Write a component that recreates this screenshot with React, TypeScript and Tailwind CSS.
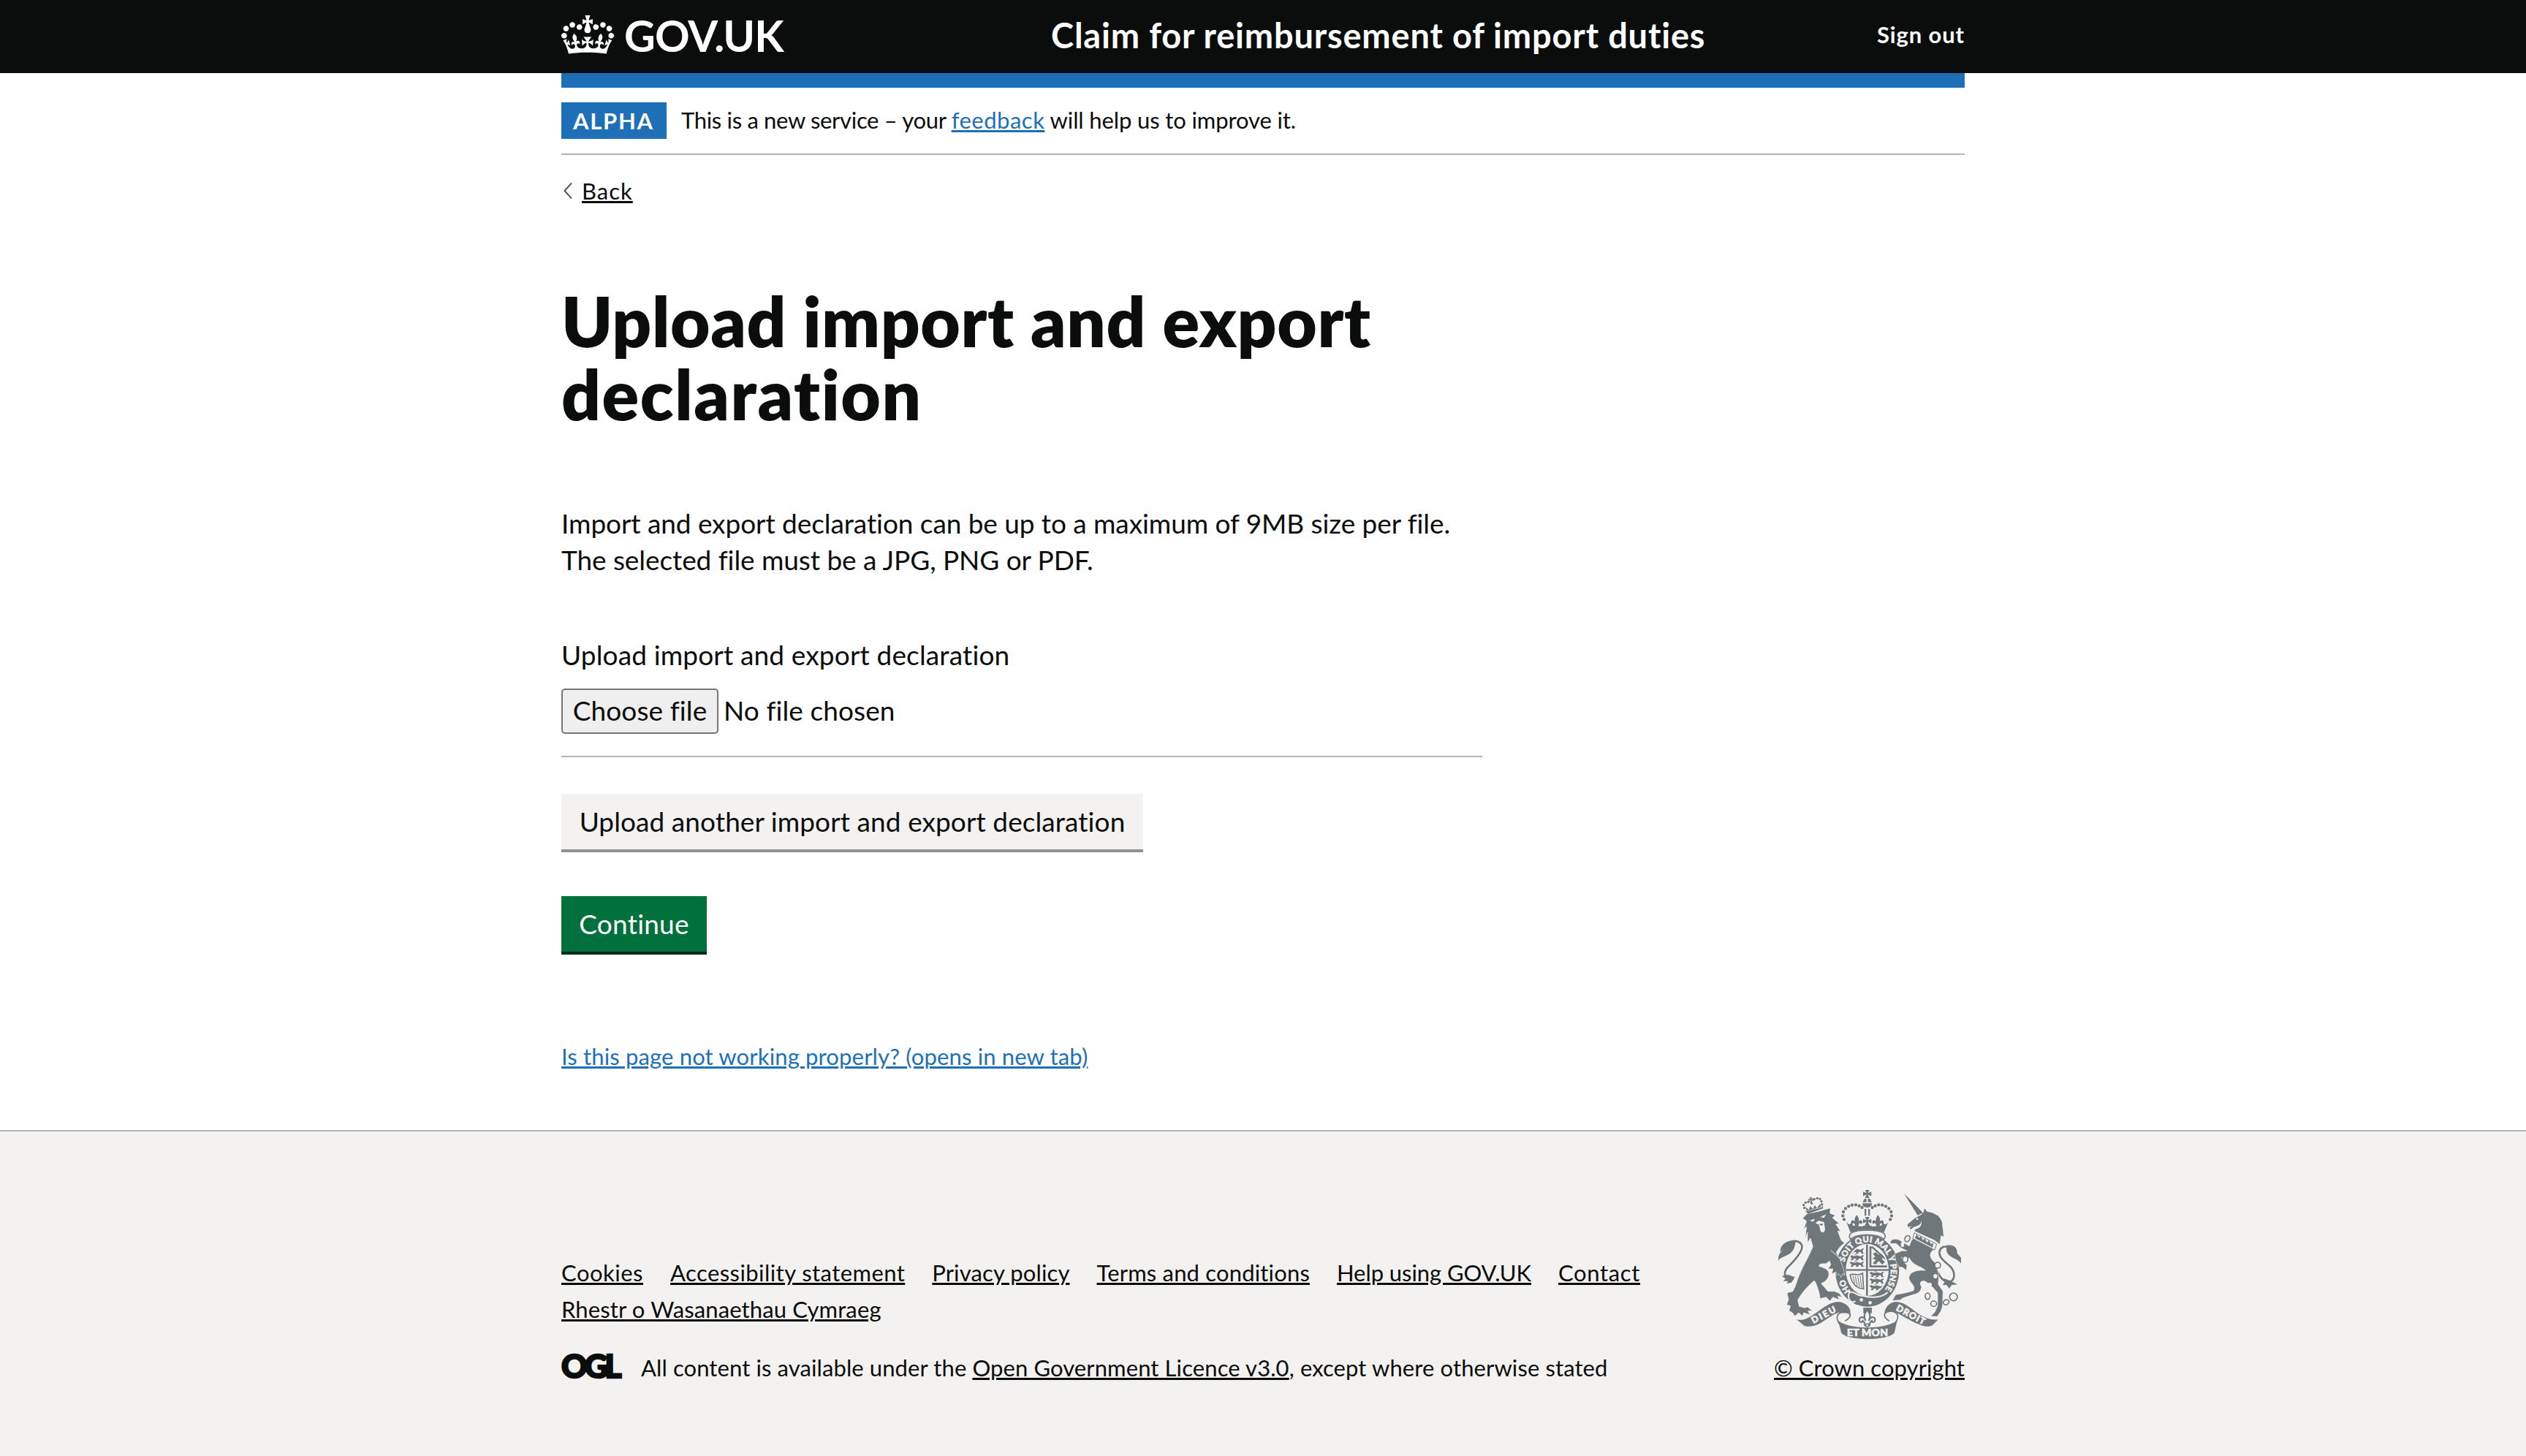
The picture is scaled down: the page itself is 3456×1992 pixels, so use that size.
import type { ReactNode } from "react";

const link = "underline decoration-[3px] underline-offset-[2px]";

function Crown() {
  return (
    <svg className="mt-[21px] h-[53px] w-[72px] shrink-0" viewBox="0 0 132 97" fill="#ffffff" aria-hidden="true">
      <path
        fillRule="evenodd"
        d="M25 30.2c3.5 1.5 7.7-.2 9.1-3.7 1.5-3.6-.2-7.8-3.9-9.2-3.6-1.4-7.6.3-9.1 3.9-1.4 3.5.3 7.5 3.9 9zM9 39.5c3.6 1.5 7.8-.2 9.2-3.7 1.5-3.6-.2-7.8-3.9-9.1-3.6-1.5-7.6.2-9.1 3.8-1.4 3.5.3 7.5 3.8 9zM4.4 57.2c3.5 1.5 7.7-.2 9.1-3.8 1.5-3.6-.2-7.7-3.9-9.1-3.5-1.5-7.6.3-9.1 3.8-1.4 3.5.3 7.6 3.9 9.1zm38.3-21.4c3.5 1.5 7.7-.2 9.1-3.8 1.5-3.6-.2-7.7-3.9-9.1-3.6-1.5-7.6.3-9.1 3.8-1.3 3.6.4 7.7 3.9 9.1zm64.4-5.6c-3.6 1.5-7.8-.2-9.1-3.7-1.5-3.6.2-7.8 3.8-9.2 3.6-1.4 7.7.3 9.2 3.9 1.3 3.5-.4 7.5-3.9 9zm15.9 9.3c-3.6 1.5-7.7-.2-9.1-3.7-1.5-3.6.2-7.8 3.7-9.1 3.6-1.5 7.7.2 9.2 3.8 1.5 3.5-.3 7.5-3.8 9zm4.7 17.7c-3.6 1.5-7.8-.2-9.2-3.8-1.5-3.6.2-7.7 3.9-9.1 3.6-1.5 7.7.3 9.2 3.8 1.3 3.5-.4 7.6-3.9 9.1zM89.3 35.8c-3.6 1.5-7.8-.2-9.2-3.8-1.4-3.6.2-7.7 3.9-9.1 3.6-1.5 7.7.3 9.2 3.8 1.4 3.6-.3 7.7-3.9 9.1zM69.7 17.7l8.9 4.7V9.3l-8.9 2.8c-.2-.3-.5-.6-.9-.9L72.4 0H59.6l3.5 11.2c-.3.3-.6.5-.9.9l-8.8-2.8v13.1l8.8-4.7c.3.3.6.7.9.9l-5 15.4v.1c-.2.8-.4 1.6-.4 2.4 0 4.1 3.1 7.5 7 8.1h.2c.3 0 .7.1 1 .1.4 0 .7 0 1-.1h.2c4-.6 7.1-4.1 7.1-8.1 0-.8-.1-1.7-.4-2.4V34l-5.1-15.4c.4-.2.7-.6 1-.9zM66 92.8c16.9 0 32.8 1.1 47.1 3.2 4-16.9 8.9-26.7 14-33.5l-9.6-3.4c1 4.9 1.1 7.2 0 10.2-1.5-1.4-3-4.3-4.2-8.7L108.6 76c2.8-2 5-3.2 7.5-3.3-4.4 9.4-10 11.9-13.6 11.2-4.3-.8-6.3-4.6-5.6-7.9 1-4.7 5.7-5.9 8-.5 4.3-8.7-3-11.4-7.6-8.8 7.1-7.2 7.9-13.5 2.1-21.1-8 6.1-8.1 12.3-4.5 20.8-4.7-5.4-12.1-2.5-9.5 6.2 3.4-5.2 7.9-2 7.2 3.1-.6 4.3-6.4 7.8-13.5 7.2-10.3-.9-10.9-8-11.2-13.8 2.5-.5 7.1 1.8 11 7.3L80.2 60c-4.1 4.4-8 5.3-12.3 5.4 1.4-4.4 8-11.6 8-11.6H55.5s6.4 7.2 7.9 11.6c-4.2-.1-8-1-12.3-5.4l1.4 16.4c3.9-5.5 8.5-7.7 10.9-7.3-.3 5.8-.9 12.8-11.1 13.8-7.2.6-12.9-2.9-13.5-7.2-.7-5 3.8-8.3 7.1-3.1 2.7-8.7-4.6-11.6-9.4-6.2 3.7-8.5 3.6-14.7-4.6-20.8-5.8 7.6-5 13.9 2.2 21.1-4.7-2.6-11.9.1-7.7 8.8 2.3-5.5 7.1-4.2 8.1.5.7 3.3-1.3 7.1-5.7 7.9-3.5.7-9-1.8-13.5-11.2 2.5.1 4.7 1.3 7.5 3.3l-4.7-15.4c-1.2 4.4-2.7 7.2-4.3 8.7-1.1-3-.9-5.3 0-10.2l-9.5 3.4c5 6.9 9.9 16.7 14 33.5 14.8-2.1 30.8-3.2 47.7-3.2z"
      />
    </svg>
  );
}

const ink = "#6f777b";
const paper = "#f3f2f1";

const crownBeads: [number, number][] = [
  [366, 205], [361, 190], [363, 174], [372, 160], [385, 151], [399, 146], [414, 145], [428, 149], [440, 156],
];

/* A three-lion quarter, drawn as rows of walking beasts. */
function Passants({ x, y }: { x: number; y: number }) {
  return (
    <g transform={`translate(${x} ${y})`}>
      {[0, 27, 54].map((dy) => (
        <path
          key={dy}
          transform={`translate(0 ${dy})`}
          d="M0 6 L8 2 L14 6 L36 5 L46 8 L54 2 L60 4 L54 10 L56 20 L64 22 L50 24 L46 16 L36 17 L38 23 L26 24 L28 17 L18 17 L14 24 L4 23 L10 16 L6 12 Z"
        />
      ))}
      <path d="M20 0 q8 -4 12 4 M20 27 q8 -4 12 4 M20 54 q8 -4 12 4" fill="none" stroke={ink} strokeWidth="3" />
    </g>
  );
}

function Pattee({ x, y, r }: { x: number; y: number; r: number }) {
  return (
    <path
      transform={`translate(${x} ${y}) scale(${r})`}
      d="M-.55 -1 H.55 L.15 -.15 L1 -.55 V.55 L.15 .15 L.55 1 H-.55 L-.15 .15 L-1 .55 V-.55 L-.15 -.15 Z"
    />
  );
}

function Fleur({ x, y, s }: { x: number; y: number; s: number }) {
  return (
    <path
      transform={`translate(${x} ${y}) scale(${s})`}
      d="M0 -20 C10 -8 8 0 4 8 C8 -4 22 -4 20 8 C18 14 12 12 12 8 C8 10 6 14 6 20 H-6 C-6 14 -8 10 -12 8 C-12 12 -18 14 -20 8 C-22 -4 -8 -4 -4 8 C-8 0 -10 -8 0 -20 Z"
    />
  );
}

function RoyalArms() {
  return (
    <svg
      className="h-[204px] w-[250px] font-['Lato',sans-serif]"
      viewBox="96 84 750 612"
      fill={ink}
      role="img"
      aria-label="Royal coat of arms"
    >
      {/* Garter and shield */}
      <ellipse cx="461" cy="415" rx="131" ry="148" />
      <ellipse cx="461" cy="412" rx="88" ry="107" fill={paper} />
      <defs>
        <path id="garter" d="M368 381 A97 117 0 1 1 530 497" />
        <path id="garter-start" d="M392 498 A97 117 0 0 1 366 439" />
        <clipPath id="shield">
          <ellipse cx="461" cy="412" rx="82" ry="101" />
        </clipPath>
      </defs>
      <g clipPath="url(#shield)">
        <Passants x={388} y={322} />
        <Passants x={470} y={418} />
        <path d="M470 316 H484 L546 372 V402 H470 Z M478 324 V394 H540 V376 L482 324 Z" fillRule="evenodd" />
        <path d="M484 346 L496 340 L508 350 L520 346 L530 362 L520 366 L534 380 L522 390 L508 376 L496 390 L484 386 L496 370 L482 366 L494 358 Z" />
        <g fill="none" stroke={ink} strokeWidth="5">
          <path d="M391 432 C405 425 425 440 442 426 L446 490 C420 490 396 468 391 432 Z" />
          <path strokeWidth="3" d="M402 436 L410 468 M412 438 L420 478 M422 438 L430 484 M432 436 L438 486" />
        </g>
      </g>
      <rect x="374" y="409" width="176" height="7" />
      <rect x="456" y="308" width="8" height="210" />
      <g fill={paper} stroke={paper} strokeWidth="1.5" fontWeight="900" fontSize="34">
        <text textLength="384" lengthAdjust="spacing">
          <textPath href="#garter">SOIT QUI MAL Y PENSE</textPath>
        </text>
        <text>
          <textPath href="#garter-start">HO</textPath>
        </text>
      </g>
      <path d="M384 504 C410 496 415 520 440 518 C480 528 520 526 545 505" fill="none" stroke={paper} strokeWidth="6" />
      <path d="M392 500 a16 22 0 1 0 20 40" fill="none" stroke={paper} strokeWidth="6" />
      <circle cx="437" cy="535" r="7" fill={paper} />
      <circle cx="473" cy="547" r="7" fill={paper} />

      {/* Crown */}
      <Pattee x={461} y={100} r={17} />
      <path d="M450 120 H458 V134 H442 Z M464 120 H472 L480 134 H464 Z M441 139 H481 C481 162 441 162 441 139 Z" />
      {crownBeads.map(([x, y]) => (
        <g key={`${x}-${y}`}>
          <circle cx={x} cy={y} r="6.5" />
          <circle cx={922 - x} cy={y} r="6.5" />
        </g>
      ))}
      <path d="M450 162 H457 V190 H450 Z M465 162 H472 V190 H465 Z" />
      <Pattee x={461} y={212} r={17} />
      <Fleur x={418} y={210} s={1.15} />
      <Fleur x={505} y={210} s={1.15} />
      <path d="M374 210 C384 232 392 226 398 216 L402 230 L440 234 L461 226 L484 234 L520 230 L524 216 C532 228 542 230 550 210 L530 258 C490 244 430 244 392 258 Z" />
      <path d="M392 286 C378 262 400 250 461 249 C522 250 546 262 530 286 C500 262 422 262 392 286 Z" fill={paper} stroke={ink} strokeWidth="5" />

      {/* Lion */}
      <path
        fill="none"
        stroke={ink}
        strokeWidth="8"
        d="M158 452 C112 446 116 418 142 394 C176 360 200 330 192 310 C184 290 156 292 146 298"
      />
      <path d="M168 291 C128 290 104 308 104 338 L118 328 C100 344 96 352 96 374 C114 350 154 358 164 312 Z" />
      <path d="M110 438 L136 432 L164 442 L150 464 L130 468 L136 458 L116 458 L126 448 Z" />
      <path
        stroke={paper}
        strokeWidth="2"
        d="M196 200 L214 182 L262 172 L310 158 L308 180 L330 188 L318 198 L346 222 L332 224 L352 254 L340 252 L354 290 L368 302 C350 314 340 328 334 342 L348 364 L362 404 L369 434 L360 428 L354 442 L344 428 L332 436 L334 420 L316 428 L320 408 L300 408 L312 390 L306 376 L292 386 L268 388 L262 396 C276 402 296 406 302 420 C308 440 296 458 272 468 L286 484 L300 500 L326 500 L346 508 L358 524 L340 520 L346 534 L320 524 L308 540 L292 524 L268 530 L264 508 C258 488 254 470 244 456 C214 480 190 510 176 536 L182 562 L204 568 L216 564 L236 580 L218 580 L226 596 L200 588 L196 602 L180 588 L164 602 L154 588 L140 580 L146 560 L130 556 L138 534 L132 506 L156 500 C170 474 172 456 182 434 C200 390 226 350 238 316 L228 282 L216 300 L216 258 L206 284 L212 234 L200 246 L212 212 Z"
      />
      <path d="M224 210 L246 202 L240 214 Z M268 196 L292 184 L284 198 Z M248 220 L262 210 L284 216 L288 246 C286 264 268 260 268 246 L262 226 Z" fill={paper} />
      <path d="M262 224 L280 222 L276 232 Z" />
      <path d="M212 172 L274 156 L278 146 L280 160 L218 182 L206 170 Z M208 154 L222 166 L226 150 L238 162 L246 146 L254 158 L268 142 L272 154 L212 170 Z" />
      <Pattee x={230} y={124} r={10} />
      {[[203, 158], [200, 146], [208, 136], [219, 133], [244, 122], [256, 118], [267, 121], [273, 131], [275, 143], [233, 139]].map(([x, y]) => (
        <circle key={`${x}-${y}`} cx={x} cy={y} r="5" />
      ))}
      <path d="M312 332 L350 366" stroke={paper} strokeWidth="3" />

      {/* Unicorn */}
      <path
        fill="none"
        stroke={ink}
        strokeWidth="8"
        d="M740 398 C752 430 770 462 796 462 C824 456 824 420 800 396 C770 372 754 356 758 336 C762 318 780 312 798 320"
      />
      <path d="M786 312 C816 306 832 322 830 344 L846 362 V386 C832 362 796 366 786 334 Z" />
      <path d="M774 446 L800 456 L832 472 L808 474 L798 488 L786 474 L770 474 L778 464 Z" />
      <path d="M612 98 L690 178 L668 188 Z" />
      <path d="M626 226 L656 200 L682 186 L692 176 L696 160 L708 174 C742 176 748 196 748 186 C766 204 772 224 768 226 L772 250 L774 276 L764 270 L758 306 L738 290 L654 252 L662 244 C680 240 688 224 682 210 C684 230 664 232 652 236 L640 246 L634 240 L644 232 L628 236 Z" />
      <circle cx="666" cy="203" r="4" fill={paper} />
      <path
        stroke={paper}
        strokeWidth="2"
        d="M650 284 L734 328 C712 346 718 364 738 382 C752 410 758 440 752 470 L772 500 L770 560 L764 580 L748 604 L722 602 L738 586 L750 560 L750 506 C736 490 716 466 696 458 C676 456 676 470 684 482 C682 500 670 510 648 514 L606 528 L596 536 L564 538 L578 514 L612 508 L650 498 C664 478 634 466 632 444 C636 418 666 412 700 414 C680 396 650 396 634 364 L602 360 L606 376 L624 392 L622 414 L606 402 L590 400 L578 374 L574 346 L604 334 L624 334 L600 322 L580 304 L556 304 C552 284 584 280 600 294 L634 314 C640 300 640 290 650 284 Z"
      />
      <path d="M654 260 L746 306 L738 330 L648 284 Z" fill={paper} stroke={ink} strokeWidth="3" />
      <path d="M656 282 L664 266 L674 280 L682 274 L690 290 L698 282 L706 300 L714 290 L722 306 L732 302 L730 320 Z" />
      <g fill="none" stroke={ink} strokeWidth="5">
        <ellipse cx="626" cy="284" rx="10" ry="13" transform="rotate(30 626 284)" fill={paper} />
        <ellipse cx="606" cy="308" rx="7" ry="10" fill={paper} stroke="none" />
        <ellipse cx="617" cy="368" rx="11" ry="13" fill={paper} />
        <circle cx="750" cy="393" r="12" fill={paper} />
        <ellipse cx="741" cy="438" rx="8" ry="9" fill={paper} stroke="none" />
        <ellipse cx="718" cy="473" rx="8" ry="9" fill={paper} stroke="none" />
        <ellipse cx="709" cy="520" rx="10" ry="13" />
        <ellipse cx="734" cy="551" rx="12" ry="11" />
        <ellipse cx="785" cy="545" rx="12" ry="10" transform="rotate(-30 785 545)" />
        <circle cx="815" cy="523" r="16" />
      </g>

      {/* Motto scroll */}
      <path d="M362 586 C334 588 330 612 350 638 L370 656 M362 586 C400 586 400 604 370 622 M560 582 C594 588 592 612 572 634 M560 582 C524 584 524 606 552 622" fill="none" stroke={ink} strokeWidth="5" />
      <path d="M172 616 C200 620 212 612 230 602 C272 578 300 545 340 543 C376 545 400 572 390 598 C384 588 372 584 358 586 C330 586 310 606 270 630 C240 646 215 648 200 640 Z" />
      <path d="M752 616 C722 620 700 608 680 598 C650 580 620 545 580 543 C552 545 532 566 532 594 C540 584 552 580 566 584 C600 592 640 625 680 638 C700 646 718 646 730 638 Z" />
      <path d="M342 620 C390 658 530 658 584 620 L572 672 C540 704 385 704 355 672 Z" />
      <g fill={paper} stroke={paper} strokeWidth="2" fontWeight="900" textAnchor="middle">
        <text fontSize="37" transform="translate(288 608) rotate(-28)" textLength="108">DIEU</text>
        <text fontSize="37" transform="translate(634 607) rotate(28)" textLength="130">DROIT</text>
        <text fontSize="42" x="462" y="684" textLength="168">ET MON</text>
      </g>
      <path d="M445 567 H480 V590 H445 Z" />
      <g fill={paper} stroke={ink} strokeWidth="4">
        <Fleur x={461} y={608} s={1.6} />
        <circle cx="461" cy="639" r="6" />
      </g>
    </svg>
  );
}

function FooterLink({ children, className }: { children: ReactNode; className: string }) {
  return (
    <li>
      <a href="#" className={`${link} ${className}`}>
        {children}
      </a>
    </li>
  );
}

export default function App() {
  return (
    <div className="flex min-h-[1992px] flex-col bg-white font-['Lato',sans-serif] text-[31px] leading-[40px] text-[#0b0c0c] [font-variant-ligatures:none]">
      <header className="h-[100px] bg-[#0b0c0c] text-white">
        <div className="mx-auto flex w-[1920px] items-start">
          <a href="#" className="flex w-[670px] items-start gap-[14px]">
            <Crown />
            <span className="text-[59px] leading-[97px] font-bold tracking-[-0.9px]">GOV.UK</span>
          </a>
          <a href="#" className="grow text-[47px] leading-[97px] font-bold tracking-[0.8px] whitespace-nowrap">
            Claim for reimbursement of import duties
          </a>
          <a href="#" className="leading-[94px] font-bold tracking-[0.87px] whitespace-nowrap">
            Sign out
          </a>
        </div>
      </header>

      <div className="mx-auto flex w-[1920px] flex-col items-start">
        <div className="h-5 w-full bg-[#1d70b8]" />
        <div className="flex h-[92px] w-full items-start gap-5 border-b-2 border-[#b1b4b6] pt-5">
          <strong className="h-[50px] w-[144px] bg-[#1d70b8] pl-4 leading-[50px] font-bold tracking-[1.7px] text-white">
            ALPHA
          </strong>
          <p className="leading-[49px] whitespace-nowrap">
            <span className="tracking-[-0.32px]">This is a new service – your </span>
            <a href="#" className={`${link} tracking-[0.5px] text-[#1d70b8]`}>feedback</a>
            <span className="tracking-[-0.12px]"> will help us to improve it.</span>
          </p>
        </div>

        <a href="#" className="mt-[29px] flex items-center gap-[13px]">
          <svg className="ml-[3px] h-6 w-3" viewBox="0 0 12 24" fill="none" stroke="#505a5f" strokeWidth="2" aria-hidden="true">
            <path d="M11 1.500 L1.500 12 L11 22.500" />
          </svg>
          <span className={`${link} tracking-[1px]`}>Back</span>
        </a>

        <main className="flex flex-col items-start">
          <h1 className="mt-[108px] text-[94px] leading-[100px] font-extrabold whitespace-nowrap">
            <span className="block tracking-[0.6px]">Upload import and export</span>
            <span className="block tracking-[1.6px]">declaration</span>
          </h1>
          <p className="mt-[102px] text-[37px] leading-[50px] tracking-[-0.07px] whitespace-nowrap">
            Import and export declaration can be up to a maximum of 9MB size per file.
            <br />
            The selected file must be a JPG, PNG or PDF.
          </p>
          <div className="mt-20 flex w-[1260px] flex-col items-start border-b-2 border-[#b1b4b6] pb-[30px] text-[37px] leading-[50px]">
            <label className="tracking-[0.15px]">Upload import and export declaration</label>
            <div className="mt-[21px] flex items-start gap-[7px]">
              <button className="h-[62px] w-[215px] rounded-[5px] border-2 border-[#767676] bg-[#efefef] pb-[2px] text-center leading-[56px] tracking-[0.1px] whitespace-nowrap">
                Choose file
              </button>
              <span className="leading-[60px] tracking-[0.1px]">No file chosen</span>
            </div>
          </div>
          <button className="mt-[50px] h-20 w-[796px] border-b-4 border-[#929191] bg-[#f3f2f1] text-[37px] leading-[76px] tracking-[0.08px] whitespace-nowrap">
            Upload another import and export declaration
          </button>
          <button className="mt-[60px] h-20 w-[199px] border-b-4 border-[#002d18] bg-[#00703c] text-[37px] leading-[76px] tracking-[0.21px] text-white">
            Continue
          </button>
          <a href="#" className={`mt-[119px] ${link} tracking-[0.15px] text-[#1d70b8]`}>
            Is this page not working properly? (opens in new tab)
          </a>
        </main>
      </div>

      <footer className="mt-[81px] grow border-t-2 border-[#b1b4b6] bg-[#f3f2f1] pt-20">
        <div className="mx-auto flex w-[1920px] items-end justify-between">
          <div className="flex flex-col">
            <ul className="flex w-[1600px] flex-wrap gap-x-[37px] leading-[50px] whitespace-nowrap">
              <FooterLink className="tracking-[0.5px]">Cookies</FooterLink>
              <FooterLink className="tracking-[0.43px]">Accessibility statement</FooterLink>
              <FooterLink className="tracking-[0.12px]">Privacy policy</FooterLink>
              <FooterLink className="tracking-[0.17px]">Terms and conditions</FooterLink>
              <FooterLink className="tracking-[-0.07px]">Help using GOV.UK</FooterLink>
              <FooterLink className="tracking-[0.64px]">Contact</FooterLink>
              <FooterLink className="tracking-[0.12px]">Rhestr o Wasanaethau Cymraeg</FooterLink>
            </ul>
            <div className="mt-[35px] flex h-10 items-start">
              <span className="w-[109px] text-[44px] leading-[34px] font-black tracking-[-4px] [-webkit-text-stroke:2.5px_#0b0c0c]">
                OGL
              </span>
              <p className="tracking-[0.1px] whitespace-nowrap">
                All content is available under the{" "}
                <a href="#" className={link}>Open Government Licence v3.0</a>, except where otherwise stated
              </p>
            </div>
          </div>
          <div className="flex w-[261px] flex-col items-center gap-[19px]">
            <RoyalArms />
            <a href="#" className={`${link} tracking-[0.06px] whitespace-nowrap`}>© Crown copyright</a>
          </div>
        </div>
      </footer>
    </div>
  );
}
